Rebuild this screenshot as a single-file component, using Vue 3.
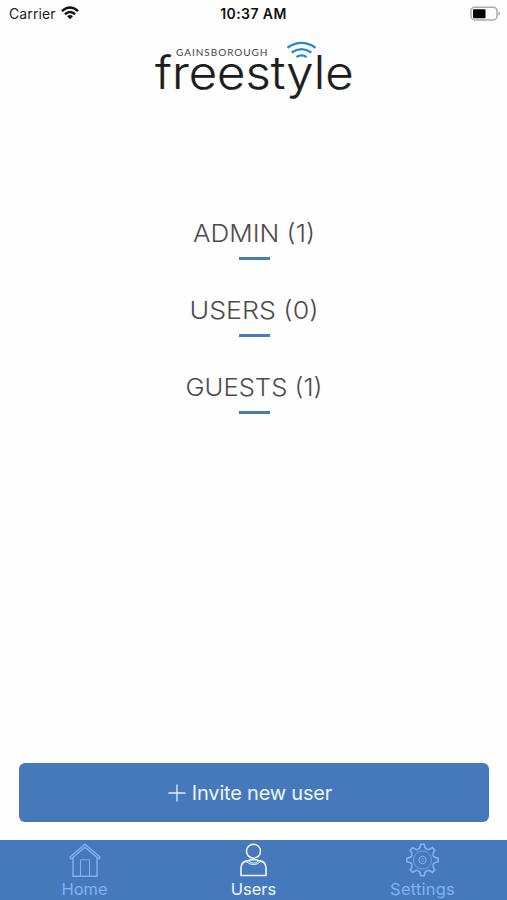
<script setup>
const groups = [
  { name: 'ADMIN', count: 1, width: 122 },
  { name: 'USERS', count: 0, width: 129 },
  { name: 'GUESTS', count: 1, width: 137 },
]
const teeth = Array.from({ length: 8 }, (_, i) => i * 45)
</script>

<template>
  <div class="screen">
    <header class="status">
      <div class="carrier">
        <span>Carrier</span>
        <svg width="18" height="14" viewBox="0 0 18 14" fill="none" stroke="#111" stroke-width="2.500">
          <path d="M.9 5.100Q9-2.200 17.100 5.100M3.900 8.200Q9 3.700 14.100 8.200" />
          <path d="M6 10.200Q9 7.800 12 10.200L9 13.200Z" fill="#111" stroke="none" />
        </svg>
      </div>
      <span class="time">10:37 AM</span>
      <svg class="battery" width="31" height="16" viewBox="0 0 31 16">
        <rect x="1" y="1.200" width="26" height="12.800" rx="4" fill="#fff" stroke="#aaa" stroke-width="1.500" />
        <rect x="3" y="3.200" width="12.500" height="9" rx="1" fill="#000" />
        <path d="M28.500 5.200q3 2.300 0 4.800z" fill="#aaa" />
      </svg>
    </header>

    <svg class="logo" width="210" height="70" viewBox="150 35 210 70">
      <text class="brand" x="177" y="55.700" textLength="91.500" lengthAdjust="spacing">GAINSBOROUGH</text>
      <text class="word" x="156" y="89" textLength="198.500" lengthAdjust="spacingAndGlyphs">freestyle</text>
      <g fill="none" stroke="#218bcb" stroke-width="2.400">
        <path d="M288.500 47.700Q302.500 38 316.500 47.700" />
        <path d="M292.700 52.500Q302.500 45.700 312.300 52.500" />
        <path d="M297.500 57Q302.500 53.700 307.500 57" />
      </g>
    </svg>

    <main class="groups">
      <section v-for="g in groups" :key="g.name" class="group">
        <svg class="group-title" width="160" height="32" viewBox="0 0 160 32">
          <text :x="80 - g.width / 2" y="24" :textLength="g.width" lengthAdjust="spacingAndGlyphs">{{ g.name }} ({{ g.count }})</text>
        </svg>
        <span class="rule"></span>
      </section>
    </main>

    <button class="invite">
      <svg width="18" height="18" viewBox="0 0 18 18" fill="none" stroke="#e2eefb" stroke-width="1.300"><path d="M9 .5v17M.5 9h17" /></svg>
      <span>Invite new user</span>
    </button>

    <nav class="tabs">
      <a class="tab home">
        <svg width="34" height="36" viewBox="0 0 34 36" fill="none" stroke="currentColor" stroke-width="1.400">
          <path d="M1.800 15.300 17 2.200 32.200 15.300M2.800 17.300 17 5.200 31.200 17.300M1.800 15.300l1 2M32.200 15.300l-1 2M5 15.500V34.200H29V15.500" />
          <path d="M12.500 34V17.800h9V34" stroke-width="1" />
        </svg>
        <span>Home</span>
      </a>
      <a class="tab users active">
        <svg width="34" height="36" viewBox="0 0 34 36" fill="none" stroke="currentColor" stroke-width="1.600">
          <ellipse cx="16.500" cy="9.200" rx="7" ry="7" />
          <path d="M10 18.900Q4.500 19.700 4 25.500V33.500H29V25.500Q28.500 19.700 23 18.900Q16.500 16.500 10 18.900Z" />
          <path d="M9 19.400Q16.500 25.900 24 19.400M12 19.400Q16.500 22.900 21 19.400" stroke-width="1" />
        </svg>
        <span>Users</span>
      </a>
      <a class="tab settings">
        <svg width="34" height="36" viewBox="-16.500 -18 34 36" fill="none" stroke="currentColor" stroke-width="1.600">
          <path v-for="a in teeth" :key="a" :transform="`rotate(${a})`" d="M-4.400-10.600Q-2.400-11.400-1.800-15.700H1.800Q2.400-11.400 4.400-10.600" />
          <circle r="9" stroke-width=".7" />
          <circle r="3.700" stroke-width="1" />
          <circle r="1.500" stroke-width=".5" />
        </svg>
        <span>Settings</span>
      </a>
    </nav>
  </div>
</template>

<style>
body { margin: 0; background: #fff; }
</style>

<style scoped>
.screen { width: 507px; height: 900px; background: #fefefe; display: flex; flex-direction: column; align-items: center; overflow: hidden; font-family: Inter, "Liberation Sans", sans-serif; }
.status { width: 100%; height: 28px; box-sizing: border-box; padding: 0 6px 0 9px; display: grid; grid-template-columns: 1fr auto 1fr; align-items: center; font-size: 14px; line-height: 28px; color: #222; flex: none; }
.carrier { display: flex; align-items: center; gap: 5px; letter-spacing: .1px; }
.carrier svg { margin-top: -2px; }
.time { font-weight: 600; font-size: 14px; letter-spacing: .4px; margin-right: 3px; color: #111; }
.battery { justify-self: end; margin-top: -1px; }
.logo { margin-top: 7px; flex: none; }
.brand { font: 400 10px Lato, sans-serif; fill: #444; }
.word { font: 300 46px Inter, sans-serif; fill: #1d1d1d; stroke: #1d1d1d; stroke-width: .2px; }
.groups { margin-top: 113px; display: flex; flex-direction: column; gap: 29px; }
.group { display: flex; flex-direction: column; align-items: center; height: 48px; padding-left: 1px; }
.group-title { flex: none; }
.group-title text { font: 300 24.500px Inter, sans-serif; fill: #4c4c4e; }
.rule { width: 31px; height: 2.500px; margin-top: 7px; background: #487bbd; }
.invite { box-sizing: border-box; width: 470px; height: 59px; margin: auto 0 18px; padding: 0 7px 0 0; flex: none; border: 0; border-radius: 6px; background: #4679bb; color: #edf5ff; display: flex; align-items: center; justify-content: center; gap: 6px; font: 400 20px Inter, sans-serif; letter-spacing: -.2px; }
.tabs { width: 100%; height: 60px; flex: none; background: #4679bb; display: grid; grid-template-columns: repeat(3, 1fr); }
.tab { display: flex; flex-direction: column; align-items: center; color: #80b2f1; font-size: 16.500px; letter-spacing: .2px; line-height: 22px; padding-top: 2px; }
.tab svg { flex: none; }
.home { letter-spacing: 0; }
.active { color: #f0f6ff; letter-spacing: 0; }
</style>
